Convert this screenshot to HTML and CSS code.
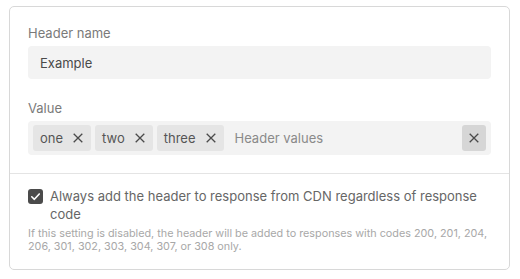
FILE: index.html
```html
<!DOCTYPE html>
<html>
<head>
<meta charset="utf-8">
<link rel="stylesheet" href="styles.css">
</head>
<body>
<div class="card">
  <div class="section top">
    <div class="field">
      <div class="label">Header name</div>
      <div class="input">Example</div>
    </div>
    <div class="field second">
      <div class="label">Value</div>
      <div class="input tags">
        <span class="tag">one<svg class="x" viewBox="0 0 10 10"><path d="M0.7 0.7L9.3 9.3M9.3 0.7L0.7 9.3"/></svg></span>
        <span class="tag">two<svg class="x" viewBox="0 0 10 10"><path d="M0.7 0.7L9.3 9.3M9.3 0.7L0.7 9.3"/></svg></span>
        <span class="tag">three<svg class="x" viewBox="0 0 10 10"><path d="M0.7 0.7L9.3 9.3M9.3 0.7L0.7 9.3"/></svg></span>
        <span class="placeholder">Header values</span>
        <span class="clear"><svg class="x" viewBox="0 0 10 10"><path d="M0.7 0.7L9.3 9.3M9.3 0.7L0.7 9.3"/></svg></span>
      </div>
    </div>
  </div>
  <div class="section bottom">
    <div class="check-row">
      <span class="checkbox"><svg viewBox="0 0 16 16"><path d="M4 8.3L6.8 11L12 5.3"/></svg></span>
      <span class="check-text">Always add the header to response from CDN regardless of response code</span>
    </div>
    <p class="help">If this setting is disabled, the header will be added to responses with codes 200, 201, 204, 206, 301, 302, 303, 304, 307, or 308 only.</p>
  </div>
</div>
</body>
</html>
```
FILE: styles.css
```css
* { box-sizing: border-box; }
html, body { margin: 0; padding: 0; background: #fff; }
body { font-family: Inter, "Noto Sans", sans-serif; }

.card {
  margin: 6px 0 0 9px;
  width: 501px;
  border: 1px solid #d8d8d8;
  border-radius: 5px;
}
.section.top { padding: 17px 18px 18px; }
.field.second { margin-top: 20px; }
.label {
  font-size: 13px;
  line-height: 18px;
  color: #7a7a7a;
  margin-bottom: 4px;
}
.input {
  background: #f3f3f3;
  border-radius: 4px;
  height: 33px;
  padding: 0 12px;
  display: flex;
  align-items: center;
  font-size: 13px;
  color: #4a4a4a;
}
.input.tags {
  height: 34px;
  padding: 4px 5px;
  gap: 4px;
}
.tag {
  display: flex;
  align-items: center;
  gap: 10px;
  height: 26px;
  padding: 0 8px 0 7px;
  background: #e5e5e5;
  border-radius: 3px;
  color: #555;
  font-size: 13px;
}
.x { width: 10px; height: 10px; }
.x path { stroke: #4a4a4a; stroke-width: 1.3; fill: none; }
.placeholder {
  flex: 1;
  margin-left: 7px;
  color: #8a8a8a;
}
.clear {
  width: 24px;
  height: 26px;
  background: #d6d6d6;
  border-radius: 3px;
  display: flex;
  align-items: center;
  justify-content: center;
}
.section.bottom {
  border-top: 1px solid #e4e4e4;
  padding: 13px 18px 16px;
}
.check-row { display: flex; gap: 7px; }
.checkbox {
  flex: none;
  width: 15px;
  height: 15px;
  margin-top: 2px;
  background: #4b4b4b;
  border-radius: 3px;
  display: flex;
}
.checkbox svg { width: 15px; height: 15px; }
.checkbox path { stroke: #fff; stroke-width: 1.7; fill: none; stroke-linecap: round; stroke-linejoin: round; }
.check-text {
  font-size: 13px;
  line-height: 18px;
  color: #666;
}
.help {
  margin: 4px 0 0;
  font-size: 10.8px;
  line-height: 13px;
  color: #a8a8a8;
}
```
